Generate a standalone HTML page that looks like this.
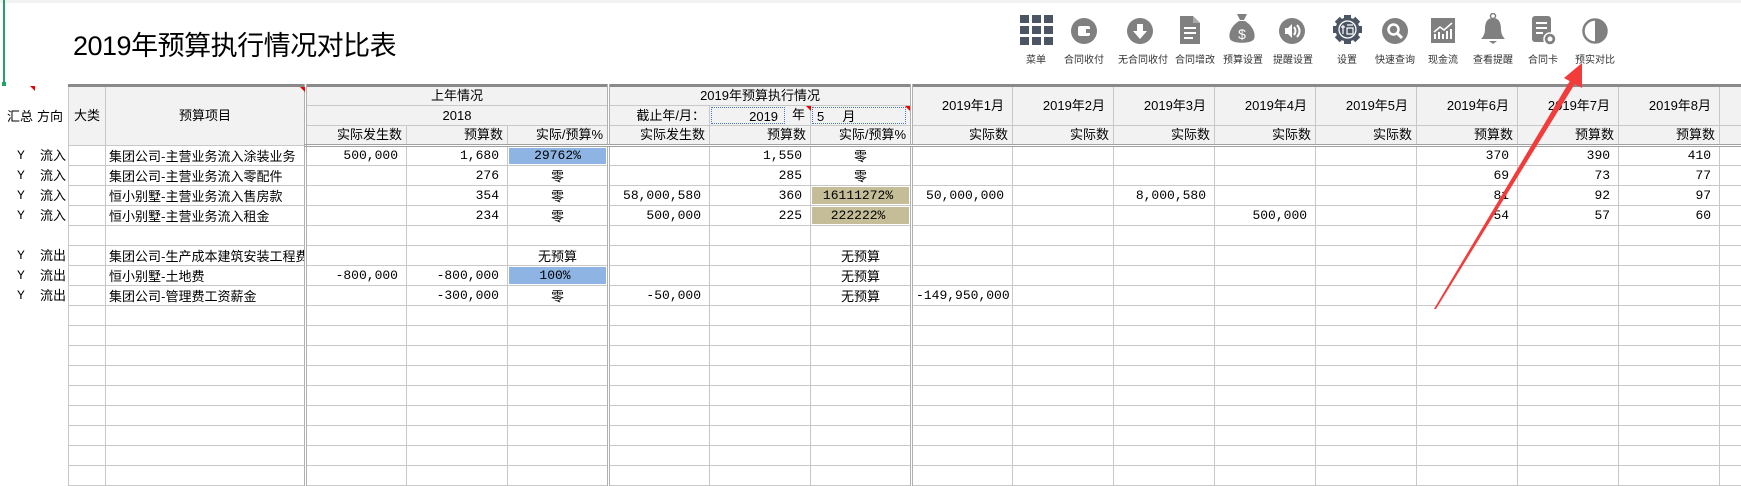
<!DOCTYPE html>
<html><head><meta charset="utf-8"><style>
*{margin:0;padding:0;box-sizing:border-box}
body{width:1741px;height:480px;overflow:hidden;background:#fff;position:relative;font-family:"Liberation Sans","Noto Sans CJK SC",sans-serif;color:#000}
.abs{position:absolute}
.title{left:73px;top:24px;font-size:27px;letter-spacing:-0.5px}
.lbl{position:absolute;top:51px;font-size:10px;color:#333;transform:translateX(-50%);white-space:nowrap}
.ic{position:absolute;top:15px}
table{position:absolute;left:68px;top:84px;border-collapse:collapse;table-layout:fixed;width:1673px;font-size:13px}
td{border:1px solid #c8c8c8;height:20px;padding:0 8px 0 3px;white-space:nowrap;overflow:hidden;line-height:18px}
tr.h td{background:#f2f2f2;font-family:"Liberation Sans","Noto Sans CJK SC",sans-serif;font-size:13px}
tr.top td{border-top:3px solid #8a8a8a}
tr.sub td{border-bottom:3px double #a0a0a0;text-align:right;padding-right:4px}
.c{text-align:center;padding:0}
.r{text-align:right}
.n{font-family:"Liberation Mono","Noto Sans CJK SC",monospace;font-size:13px;text-align:right}
.z{font-family:"Noto Sans CJK SC",sans-serif;text-align:center;padding:0;font-size:13px}
.s{border-left:3px double #b0b0b0}
.blue{background:#8db4e2;box-shadow:inset 0 0 0 1px #fff}
.tan{background:#c4bd97;box-shadow:inset 0 0 0 1px #fff}
.t{font-family:"Noto Sans CJK SC",sans-serif;font-size:13px}
.left{position:absolute;font-size:13px;font-family:"Liberation Sans","Noto Sans CJK SC",sans-serif}
.tri{position:absolute;width:0;height:0;border-top:5px solid #e00;border-left:5px solid transparent}
</style></head><body>
<div class="abs" style="left:0;top:0;width:1741px;height:3px;background:#f2f2f2"></div>
<div class="abs" style="left:3px;top:0;width:2px;height:84px;background:#21a366"></div>
<div class="abs" style="left:2px;top:82px;width:4px;height:4px;background:#21a366"></div>
<div class="abs title">2019年预算执行情况对比表</div>

<!-- toolbar -->
<svg class="ic" style="left:1020px" width="33" height="30" viewBox="0 0 33 30"><g fill="#4b5563"><rect x="0" y="0" width="9" height="8"/><rect x="12" y="0" width="9" height="8"/><rect x="24" y="0" width="9" height="8"/><rect x="0" y="11" width="9" height="8"/><rect x="12" y="11" width="9" height="8"/><rect x="24" y="11" width="9" height="8"/><rect x="0" y="22" width="9" height="8"/><rect x="12" y="22" width="9" height="8"/><rect x="24" y="22" width="9" height="8"/></g></svg>
<svg class="ic" style="left:1071px;top:18px" width="26" height="26" viewBox="0 0 26 26"><circle cx="13" cy="13" r="13" fill="#808080"/><rect x="7" y="8" width="12" height="10" rx="2" fill="#fff"/><rect x="15" y="11" width="4" height="4" fill="#808080"/></svg>
<svg class="ic" style="left:1127px;top:18px" width="26" height="26" viewBox="0 0 26 26"><circle cx="13" cy="13" r="13" fill="#808080"/><path d="M10 6h6v7h4l-7 8-7-8h4z" fill="#fff"/></svg>
<svg class="ic" style="left:1180px;top:16px" width="20" height="28" viewBox="0 0 20 28"><path d="M0 0h13l7 7v21H0z" fill="#808080"/><path d="M13 0v7h7" fill="#aaa"/><g stroke="#fff" stroke-width="2"><path d="M4 12h12M4 17h12M4 22h9"/></g></svg>
<svg class="ic" style="left:1229px;top:14px" width="26" height="31" viewBox="0 0 26 31"><path d="M8 0h10l-3 6h-4z" fill="#808080"/><path d="M10 7h6C24 12 27 20 25 25 23 30 3 30 1 25-1 20 2 12 10 7z" fill="#808080"/><text x="13" y="25" font-size="14" fill="#fff" text-anchor="middle" font-family="Liberation Sans">$</text></svg>
<svg class="ic" style="left:1279px;top:18px" width="26" height="26" viewBox="0 0 26 26"><circle cx="13" cy="13" r="13" fill="#808080"/><path d="M6 10h3l4-4v14l-4-4H6z" fill="#fff"/><path d="M15 9q3 4 0 8M18 7q5 6 0 12" stroke="#fff" stroke-width="2" fill="none"/></svg>
<svg class="ic" style="left:1333px;top:15px" width="29" height="29" viewBox="0 0 29 29"><g fill="#4b5563"><circle cx="14.5" cy="14.5" r="12"/><rect x="11" y="0" width="7" height="29"/><rect x="0" y="11" width="29" height="7"/><rect x="11" y="0" width="7" height="29" transform="rotate(45 14.5 14.5)"/><rect x="11" y="0" width="7" height="29" transform="rotate(-45 14.5 14.5)"/></g><circle cx="14.5" cy="14.5" r="8.5" fill="none" stroke="#fff" stroke-width="1.3"/><path d="M10 10v9M8 12h4M14 10h6M14 13h6v6h-6z" stroke="#fff" stroke-width="1.2" fill="none"/></svg>
<svg class="ic" style="left:1382px;top:18px" width="26" height="26" viewBox="0 0 26 26"><circle cx="13" cy="13" r="13" fill="#808080"/><circle cx="11.5" cy="11.5" r="5" fill="none" stroke="#fff" stroke-width="2.5"/><path d="M15 15l5 5" stroke="#fff" stroke-width="3"/></svg>
<svg class="ic" style="left:1431px;top:18px" width="24" height="25" viewBox="0 0 24 25"><rect width="24" height="25" fill="#808080"/><path d="M4 21v-5M8 21v-7M12 21v-5M16 21v-8M20 21v-10" stroke="#fff" stroke-width="2"/><path d="M3 14l6-5 4 3 8-7" stroke="#fff" stroke-width="1.5" fill="none"/></svg>
<svg class="ic" style="left:1480px;top:13px" width="26" height="31" viewBox="0 0 26 31"><circle cx="13" cy="3" r="2.5" fill="none" stroke="#808080" stroke-width="1.5"/><path d="M13 5c-6 0-8 5-8 11 0 5-2 8-4 10h24c-2-2-4-5-4-10 0-6-2-11-8-11z" fill="#808080"/><path d="M9 28h8l-4 3z" fill="#808080"/></svg>
<svg class="ic" style="left:1532px;top:16px" width="24" height="29" viewBox="0 0 24 29"><rect x="0" y="0" width="19" height="26" rx="3" fill="#808080"/><path d="M4 7h11M4 12h11M4 17h7" stroke="#fff" stroke-width="2"/><circle cx="18" cy="23" r="6" fill="#808080" stroke="#fff" stroke-width="1.5"/><circle cx="18" cy="23" r="2.5" fill="#fff"/></svg>
<svg class="ic" style="left:1582px;top:18px" width="26" height="26" viewBox="0 0 26 26"><circle cx="13" cy="13" r="11.5" fill="#fff" stroke="#808080" stroke-width="2.5"/><path d="M13 1.5a11.5 11.5 0 0 1 0 23z" fill="#808080"/></svg>
<div class="lbl" style="left:1036px">菜单</div>
<div class="lbl" style="left:1084px">合同收付</div>
<div class="lbl" style="left:1143px">无合同收付</div>
<div class="lbl" style="left:1195px">合同增改</div>
<div class="lbl" style="left:1243px">预算设置</div>
<div class="lbl" style="left:1293px">提醒设置</div>
<div class="lbl" style="left:1347px">设置</div>
<div class="lbl" style="left:1395px">快速查询</div>
<div class="lbl" style="left:1443px">现金流</div>
<div class="lbl" style="left:1493px">查看提醒</div>
<div class="lbl" style="left:1543px">合同卡</div>
<div class="lbl" style="left:1595px">预实对比</div>

<table>
<colgroup><col style="width:37px"><col style="width:200px"><col span="14" style="width:101px"><col style="width:22px"></colgroup>
<tr class="h top"><td rowspan="3" class="c">大类</td><td rowspan="3" class="c">预算项目</td><td colspan="3" class="c s">上年情况</td><td colspan="3" class="c s">2019年预算执行情况</td>
<td rowspan="2" class="r s">2019年1月</td><td rowspan="2" class="r">2019年2月</td><td rowspan="2" class="r">2019年3月</td><td rowspan="2" class="r">2019年4月</td><td rowspan="2" class="r">2019年5月</td><td rowspan="2" class="r">2019年6月</td><td rowspan="2" class="r">2019年7月</td><td rowspan="2" class="r">2019年8月</td><td rowspan="2"></td></tr>
<tr class="h"><td colspan="3" class="c s">2018</td><td class="r s" style="padding-right:4px">截止年/月：</td><td style="padding:0;position:relative"><div style="position:absolute;left:1px;top:1px;width:74px;height:17px;border:1px dotted #4a78c0;text-align:right;padding-right:6px">2019</div><span style="position:absolute;left:82px;top:0">年</span></td><td style="padding:0;position:relative"><div style="position:absolute;left:1px;top:1px;width:94px;height:17px;border:1px dotted #4a78c0;padding-left:4px">5&nbsp;&nbsp;&nbsp;&nbsp;&nbsp;月</div></td></tr>
<tr class="h sub"><td class="s">实际发生数</td><td>预算数</td><td>实际/预算%</td><td class="s">实际发生数</td><td>预算数</td><td>实际/预算%</td><td class="s">实际数</td><td>实际数</td><td>实际数</td><td>实际数</td><td>实际数</td><td>预算数</td><td>预算数</td><td>预算数</td><td></td></tr>
<tr><td></td><td class="t">集团公司-主营业务流入涂装业务</td><td class="n s">500,000</td><td class="n">1,680</td><td class="n blue c" style="text-align:center">29762%</td><td class="s"></td><td class="n">1,550</td><td class="z">零</td><td class="s"></td><td></td><td></td><td></td><td></td><td class="n">370</td><td class="n">390</td><td class="n">410</td><td></td></tr>
<tr><td></td><td class="t">集团公司-主营业务流入零配件</td><td class="s"></td><td class="n">276</td><td class="z">零</td><td class="s"></td><td class="n">285</td><td class="z">零</td><td class="s"></td><td></td><td></td><td></td><td></td><td class="n">69</td><td class="n">73</td><td class="n">77</td><td></td></tr>
<tr><td></td><td class="t">恒小别墅-主营业务流入售房款</td><td class="s"></td><td class="n">354</td><td class="z">零</td><td class="n s">58,000,580</td><td class="n">360</td><td class="n tan" style="text-align:center">16111272%</td><td class="n s">50,000,000</td><td></td><td class="n">8,000,580</td><td></td><td></td><td class="n">81</td><td class="n">92</td><td class="n">97</td><td></td></tr>
<tr><td></td><td class="t">恒小别墅-主营业务流入租金</td><td class="s"></td><td class="n">234</td><td class="z">零</td><td class="n s">500,000</td><td class="n">225</td><td class="n tan" style="text-align:center">222222%</td><td class="s"></td><td></td><td></td><td class="n">500,000</td><td></td><td class="n">54</td><td class="n">57</td><td class="n">60</td><td></td></tr>
<tr><td></td><td></td><td class="s"></td><td></td><td></td><td class="s"></td><td></td><td></td><td class="s"></td><td></td><td></td><td></td><td></td><td></td><td></td><td></td><td></td></tr>
<tr><td></td><td class="t" style="text-overflow:clip">集团公司-生产成本建筑安装工程费</td><td class="s"></td><td></td><td class="z">无预算</td><td class="s"></td><td></td><td class="z">无预算</td><td class="s"></td><td></td><td></td><td></td><td></td><td></td><td></td><td></td><td></td></tr>
<tr><td></td><td class="t">恒小别墅-土地费</td><td class="n s">-800,000</td><td class="n">-800,000</td><td class="n blue" style="text-align:center">100%</td><td class="s"></td><td></td><td class="z">无预算</td><td class="s"></td><td></td><td></td><td></td><td></td><td></td><td></td><td></td><td></td></tr>
<tr><td></td><td class="t">集团公司-管理费工资薪金</td><td class="s"></td><td class="n">-300,000</td><td class="z">零</td><td class="n s">-50,000</td><td></td><td class="z">无预算</td><td class="n s">-149,950,000</td><td></td><td></td><td></td><td></td><td></td><td></td><td></td><td></td></tr>
<tr><td></td><td></td><td class="s"></td><td></td><td></td><td class="s"></td><td></td><td></td><td class="s"></td><td></td><td></td><td></td><td></td><td></td><td></td><td></td><td></td></tr>
<tr><td></td><td></td><td class="s"></td><td></td><td></td><td class="s"></td><td></td><td></td><td class="s"></td><td></td><td></td><td></td><td></td><td></td><td></td><td></td><td></td></tr>
<tr><td></td><td></td><td class="s"></td><td></td><td></td><td class="s"></td><td></td><td></td><td class="s"></td><td></td><td></td><td></td><td></td><td></td><td></td><td></td><td></td></tr>
<tr><td></td><td></td><td class="s"></td><td></td><td></td><td class="s"></td><td></td><td></td><td class="s"></td><td></td><td></td><td></td><td></td><td></td><td></td><td></td><td></td></tr>
<tr><td></td><td></td><td class="s"></td><td></td><td></td><td class="s"></td><td></td><td></td><td class="s"></td><td></td><td></td><td></td><td></td><td></td><td></td><td></td><td></td></tr>
<tr><td></td><td></td><td class="s"></td><td></td><td></td><td class="s"></td><td></td><td></td><td class="s"></td><td></td><td></td><td></td><td></td><td></td><td></td><td></td><td></td></tr>
<tr><td></td><td></td><td class="s"></td><td></td><td></td><td class="s"></td><td></td><td></td><td class="s"></td><td></td><td></td><td></td><td></td><td></td><td></td><td></td><td></td></tr>
<tr><td></td><td></td><td class="s"></td><td></td><td></td><td class="s"></td><td></td><td></td><td class="s"></td><td></td><td></td><td></td><td></td><td></td><td></td><td></td><td></td></tr>
<tr><td></td><td></td><td class="s"></td><td></td><td></td><td class="s"></td><td></td><td></td><td class="s"></td><td></td><td></td><td></td><td></td><td></td><td></td><td></td><td></td></tr>
</table>

<div class="left" style="left:7px;top:106px">汇总</div>
<div class="left" style="left:37px;top:106px">方向</div>
<div class="tri" style="left:30px;top:86px"></div>
<div class="tri" style="left:300px;top:87px"></div>
<div class="tri" style="left:806px;top:106px"></div>
<div class="tri" style="left:905px;top:106px"></div>
<div class="left" style="left:17px;top:146px;line-height:20px;font-family:'Liberation Mono',monospace">Y<br>Y<br>Y<br>Y<br><br>Y<br>Y<br>Y</div>
<div class="left" style="left:40px;top:146px;line-height:20px">流入<br>流入<br>流入<br>流入<br><br>流出<br>流出<br>流出</div>

<svg class="abs" style="left:0;top:0" width="1741" height="480"><polygon points="1434,309 1436,309 1576,82 1571,79" fill="#f23c3c"/><polygon points="1582,63 1564,78 1582,88" fill="#f23c3c"/></svg>
</body></html>
